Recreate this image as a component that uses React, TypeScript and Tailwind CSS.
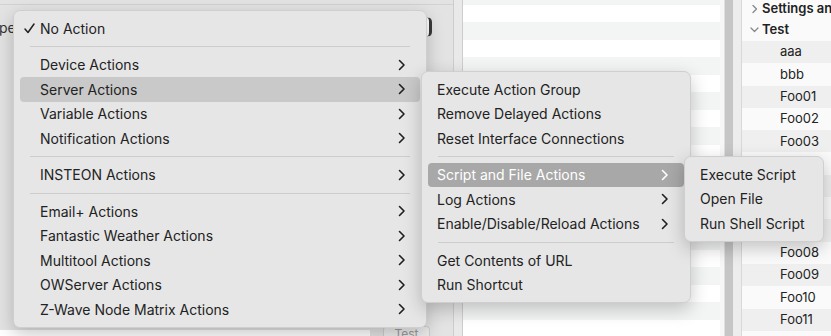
type Item = { label: string; sub?: boolean; check?: boolean; hl?: 'soft' | 'strong' } | 'sep'

const mainItems: Item[] = [
  { label: 'No Action', check: true },
  'sep',
  { label: 'Device Actions', sub: true },
  { label: 'Server Actions', sub: true, hl: 'soft' },
  { label: 'Variable Actions', sub: true },
  { label: 'Notification Actions', sub: true },
  'sep',
  { label: 'INSTEON Actions', sub: true },
  'sep',
  { label: 'Email+ Actions', sub: true },
  { label: 'Fantastic Weather Actions', sub: true },
  { label: 'Multitool Actions', sub: true },
  { label: 'OWServer Actions', sub: true },
  { label: 'Z-Wave Node Matrix Actions', sub: true },
]

const serverItems: Item[] = [
  { label: 'Execute Action Group' },
  { label: 'Remove Delayed Actions' },
  { label: 'Reset Interface Connections' },
  'sep',
  { label: 'Script and File Actions', sub: true, hl: 'strong' },
  { label: 'Log Actions', sub: true },
  { label: 'Enable/Disable/Reload Actions', sub: true },
  'sep',
  { label: 'Get Contents of URL' },
  { label: 'Run Shortcut' },
]

const scriptItems: Item[] = [{ label: 'Execute Script' }, { label: 'Open File' }, { label: 'Run Shell Script' }]

function Chevron({ light }: { light?: boolean }) {
  return (
    <svg width="8" height="12" viewBox="0 0 8 12" className="shrink-0">
      <path d="M1.5 1.5 L6 6 L1.5 10.5" fill="none" stroke={light ? '#ffffff' : '#1f1f1f'} strokeWidth="1.6" strokeLinecap="round" strokeLinejoin="round" />
    </svg>
  )
}

function Check() {
  return (
    <svg width="11" height="11" viewBox="0 0 11 11" className="-ml-[16px] mr-[5px] shrink-0">
      <path d="M1 6 L4 9.5 L10 1" fill="none" stroke="#222" strokeWidth="1.5" strokeLinecap="round" strokeLinejoin="round" />
    </svg>
  )
}

// checkCol: menus with a checked item keep a wider left gutter
function Menu({ items, className, checkCol }: { items: Item[]; className: string; checkCol?: boolean }) {
  return (
    <div
      className={`absolute rounded-[7px] border border-[#cfcfcf] bg-[#e6e6e6] px-[6px] pt-[5px] pb-[5px] shadow-[0_6px_18px_rgba(0,0,0,0.22)] ${className}`}
    >
      {items.map((it, i) =>
        it === 'sep' ? (
          <div key={i} className="flex h-[12px] items-center px-[10px]">
            <div className="h-px w-full bg-[#cdcdcd]" />
          </div>
        ) : (
          <div
            key={i}
            className={`flex h-[24.5px] items-center rounded-[4px] ${checkCol ? 'pl-[20px] pr-[14px]' : 'pl-[9px] pr-[15px]'} ${
              it.hl === 'soft' ? 'bg-[#c9c9c9] text-[#222]' : it.hl === 'strong' ? 'bg-[#a8a8a8] text-white' : 'text-[#222]'
            }`}
          >
            {it.check && <Check />}
            <span className="flex-1 whitespace-nowrap">{it.label}</span>
            {it.sub && <Chevron light={it.hl === 'strong'} />}
          </div>
        ),
      )}
    </div>
  )
}

const midRows = Array.from({ length: 20 })
const outline = ['aaa', 'bbb', 'Foo01', 'Foo02', 'Foo03', 'Foo04', 'Foo05', 'Foo06', 'Foo07', 'Foo08', 'Foo09', 'Foo10', 'Foo11']

export default function App() {
  return (
    <div className="relative flex h-[336px] w-[831px] overflow-hidden bg-[#e4e4e4] text-[14px] text-[#222] [font-family:Inter,'Noto_Sans',sans-serif]">
      {/* left window pane */}
      <div className="flex w-[453px] shrink-0 flex-col bg-[#e3e3e3]">
        <div className="mt-[4px] h-px bg-[#d2d2d2]" />
        <div className="mt-[12px] flex h-[20px] items-center">
          <span className="-ml-[17px] text-[#333]">Type</span>
          <div className="ml-auto mr-[21px] h-[20px] w-[60px] rounded-[5px] border border-[#bdbdbd] border-r-[3px] border-r-[#3a3a3a] bg-white" />
        </div>
        <div className="mt-auto flex h-[10px] items-end">
          <div className="h-[6px] w-[370px] bg-white" />
          <div className="ml-[13px] flex h-[10px] w-[47px] items-start justify-center overflow-hidden rounded-t-[4px] border border-b-0 border-[#cfcfcf] bg-[#ececec]">
            <span className="-mt-[2px] text-[12px] text-[#9a9a9a]">Test</span>
          </div>
        </div>
      </div>
      {/* splitter */}
      <div className="w-[10px] shrink-0 border-x border-[#cdcdcd] bg-[#e9e9e9]" />
      {/* striped table */}
      <div className="flex w-[257px] shrink-0 flex-col bg-white shadow-[inset_14px_0_14px_-10px_rgba(0,0,0,0.08)]">
        <div className="h-[4.5px] shrink-0 bg-[#f3f4f4]" />
        {midRows.map((_, i) => (
          <div key={i} className={`h-[17.5px] shrink-0 ${i % 2 ? 'bg-[#f3f4f4]' : 'bg-white'}`} />
        ))}
      </div>
      {/* divider */}
      <div className="flex w-[22px] shrink-0">
        <div className="w-[5px] border-r border-[#e0e0e0] bg-[#f7f7f7]" />
        <div className="w-[8px] bg-[#c6c6c6]" />
        <div className="w-[9px] border-r border-[#d8d8d8] bg-[#ededed]" />
      </div>
      {/* outline */}
      <div className="flex flex-1 flex-col bg-[#fafafa] text-[13px]">
        <div className="flex h-[18px] items-center pl-[8px] font-semibold">
          <svg width="11" height="10" viewBox="0 0 11 10" className="mr-[1px] shrink-0">
            <path d="M3 1.5 L6.5 5 L3 8.5" fill="none" stroke="#888" strokeWidth="1.3" strokeLinecap="round" strokeLinejoin="round" />
          </svg>
          <span className="whitespace-nowrap">Settings and</span>
        </div>
        <div className="flex h-[23px] items-center pl-[7px] font-semibold">
          <svg width="11" height="8" viewBox="0 0 11 8" className="mr-[2px]">
            <path d="M2 2 L5.5 5.5 L9 2" fill="none" stroke="#888" strokeWidth="1.3" strokeLinecap="round" strokeLinejoin="round" />
          </svg>
          <span>Test</span>
        </div>
        {outline.map((t, i) => (
          <div key={t} className={`flex h-[22.3px] shrink-0 items-center pl-[38px] ${i % 2 === 0 ? 'bg-[#efefef]' : 'bg-[#fafafa]'}`}>
            {t}
          </div>
        ))}
      </div>

      <Menu items={mainItems} checkCol className="left-[13px] top-[10px] w-[414px]" />
      <Menu items={serverItems} className="left-[421px] top-[71px] w-[270px]" />
      <Menu items={scriptItems} className="left-[684px] top-[156px] w-[140px]" />
    </div>
  )
}
